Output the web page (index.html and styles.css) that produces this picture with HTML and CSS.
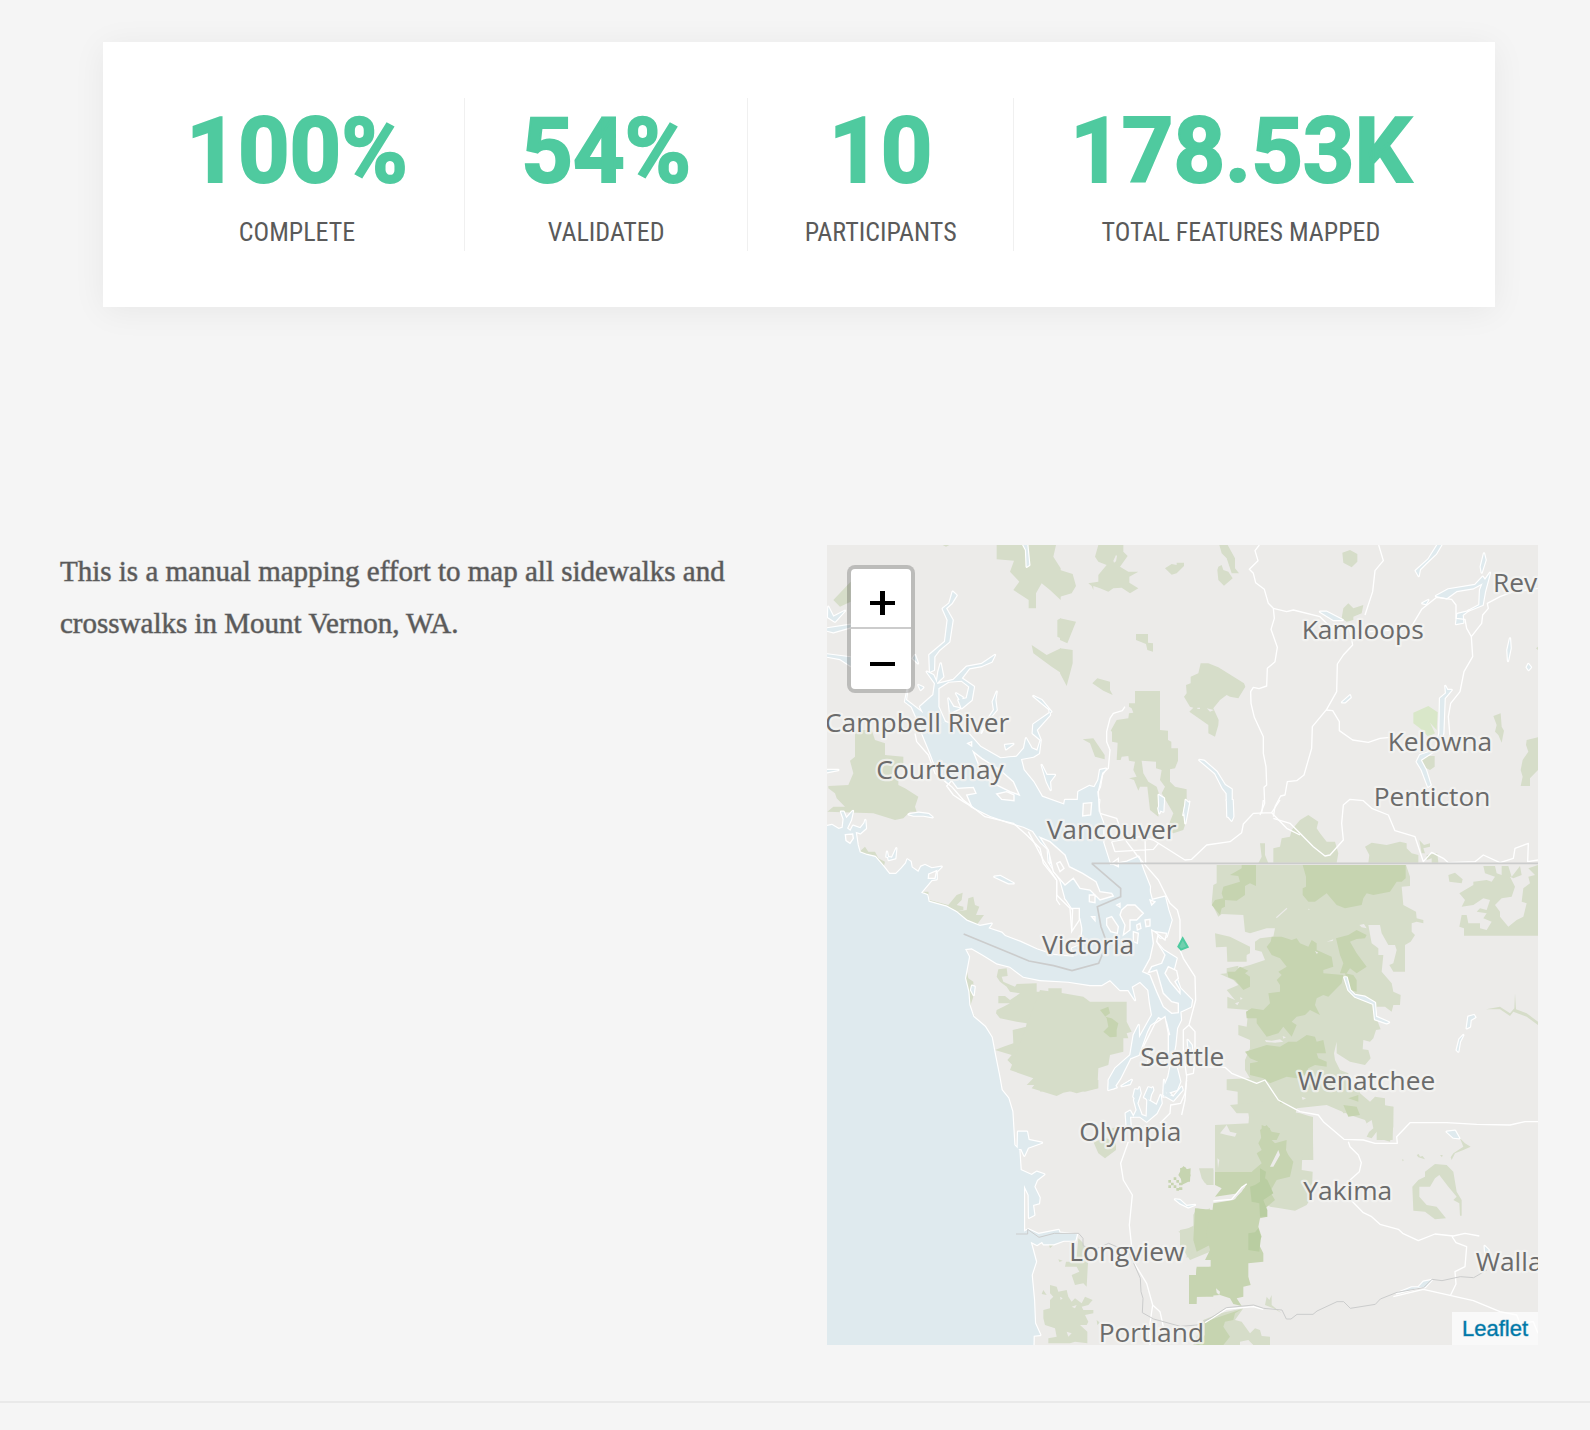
FILE: index.html
```html
<!DOCTYPE html>
<html lang="en">
<head>
<meta charset="utf-8">
<meta name="viewport" content="width=device-width, initial-scale=1">
<title>Mount Vernon sidewalks</title>
<link rel="stylesheet" href="styles.css">
</head>
<body>
<main class="page">
  <section class="stats">
    <div class="stat"><p class="stat-value">100%</p><p class="stat-label">COMPLETE</p></div>
    <div class="stat"><p class="stat-value">54%</p><p class="stat-label">VALIDATED</p></div>
    <div class="stat"><p class="stat-value">10</p><p class="stat-label">PARTICIPANTS</p></div>
    <div class="stat"><p class="stat-value">178.53K</p><p class="stat-label">TOTAL FEATURES MAPPED</p></div>
  </section>

  <section class="overview">
    <p class="description">This is a manual mapping effort to map all sidewalks and crosswalks in Mount Vernon, WA.</p>
    <div class="map">
      <svg class="map-canvas" viewBox="0 0 2133 2400" preserveAspectRatio="xMidYMid slice" role="img" aria-label="Map of the Pacific Northwest">
        <defs>
          <g id="water">
            <!-- Pacific -->
            <path d="M-20 843L0 843L15 840L35 852L47 848L50 822L42 800L50 800L58 820L75 800L78 798L72 825L60 850L70 858L78 842L100 850L112 835L115 825L117 850L100 865L86 860L92 900L98 922L120 930L145 936L170 965L187 987L207 987L224 970L237 955L241 943L251 950L254 967L274 981L282 965L294 960L314 970L344 965L329 980L329 1003L314 1005L282 1043L301 1050L305 1070L359 1085L389 1102L419 1127L459 1143L494 1136L484 1150L524 1163L534 1173L579 1190L629 1213L680 1230L740 1235L735 1210L760 1200L770 1130L755 1085L745 1135L739 1080L714 1060L739 1055L700 1000L780 1020L900 1060L960 1010L975 1065L1014 1055L1024 1095L1034 1125L1019 1175L1000 1178L984 1160L974 1175L1009 1215L1049 1240L1040 1275L1060 1330L1095 1365L1092 1385L1060 1400L1062 1425L1050 1450L1045 1500L1038 1540L1050 1570L1060 1610L1050 1635L1020 1645L1010 1635L1045 1600L1030 1560L1015 1555L1022 1480L1010 1477L1030 1470L1020 1430L994 1415L984 1430L970 1440L960 1460L935 1530L910 1540L880 1600L860 1630L845 1630L845 1605L865 1570L910 1530L920 1470L935 1440L936 1480L975 1410L969 1375L964 1335L939 1310L914 1325L924 1365L904 1335L879 1335L849 1305L824 1320L789 1320L724 1310L639 1305L589 1295L549 1265L509 1255L469 1230L434 1210L414 1212L426 1235L414 1300L424 1340L427 1380L439 1415L474 1445L494 1477L504 1530L516 1590L524 1635L544 1660L556 1700L562 1800L577 1815L581 1875L614 1890L629 1880L652 1888L630 1905L622 1925L638 1958L636 1975L618 1980L622 2010L606 2018L605 1950L591 1920L591 2060L604 2053L635 2067L695 2055L698 2063L750 2068L745 2087L710 2087L680 2098L650 2098L645 2090L630 2100L611 2090L627 2150L614 2190L621 2265L624 2335L640 2370L620 2372L619 2420L-20 2420Z"/>
            <!-- Willapa and Grays Harbor -->
            <path d="M573 1760L600 1760L605 1785L645 1793L603 1808L592 1832L583 1812L572 1812Z"/>
            <!-- Strait of Georgia -->
            <path d="M284 562L354 530L415 555L460 605L520 640L580 635L590 675L620 712L645 755L715 780L740 805L750 780L790 765L800 790L812 820L815 850L850 960L900 950L935 935L949 975L969 1025L960 1120L980 1190L780 1215L760 1120L735 1090L715 1060L700 1005L665 950L662 912L640 890L618 858L590 845L545 832L490 813L434 785L400 750L375 725L335 690L311 628Z"/>
            <g transform="translate(-21 -15)">
              <path d="M398 155L410 166L395 190L378 205L398 240L388 305L358 330L343 350L342 390L330 395L328 345L375 305L383 240L368 206L388 190Z"/>
              <path d="M320 395L340 405L352 432L400 420L440 380L485 372L525 345L515 365L485 378L448 385L425 415L462 440L455 480L425 505L415 480L440 475L448 440L425 422L385 425L355 445L355 500L375 545L310 580L275 500L255 485L262 450L258 480L310 520L300 500L340 465L345 430Z"/>
              <path d="M362 370L370 410L350 430L355 395ZM385 475L400 500L420 505L390 520ZM408 460L428 472L425 490ZM295 435L310 442L302 450ZM278 355L285 345L294 370Z"/>
              <path d="M640 468L665 480L694 515L640 553L638 580L662 600L652 632L635 625L618 595L612 625L590 650L550 655L560 665L640 650L657 640L662 600L650 570L690 525L688 508Z"/>
              <path d="M530 455L526 480L530 510L500 545L484 578L498 545L522 510L518 485ZM665 675L680 705L705 705L690 725L692 750L680 725ZM555 615L580 612L558 628Z"/>
              <path d="M610 15L622 15L628 75L620 80L618 30ZM21 265L92 254L92 262L40 277L21 272ZM21 343L92 352L92 378L60 357L21 350ZM25 200L40 230L75 212L45 245L24 232ZM20 690L55 690L20 697Z"/>
            </g>
            <g transform="translate(699 -15)">
              <path d="M120 690L138 686L126 705L120 740L112 755L118 815L90 815L85 790L60 785L68 815L52 800L55 755L88 738L103 742L115 720Z"/>
              <path d="M418 660L432 662L470 695L495 735L515 748L515 830L502 830L500 760L488 745L465 700ZM296 765L312 775L310 815L298 810ZM388 785L375 800L370 825L380 808Z"/>
            </g>
            <g transform="translate(1419 -15)">
              <path d="M412 15L424 15L408 42L378 70L360 88L356 108L347 92L385 58ZM552 40L557 60L545 98L542 80ZM570 98L555 155L548 195L505 212L488 225L490 248L468 252L472 222L500 215L538 195L540 150L548 130L520 145L470 153L440 175L408 168L445 148L525 135L548 110L555 120ZM367 190L385 180L378 192ZM60 215L80 215L128 240L100 240ZM630 295L632 325L624 363L622 330ZM685 372L693 382L686 390L680 382ZM126 487L150 466L152 472L135 487Z"/>
              <path d="M436 438L442 450L455 450L434 475L430 580L418 620L400 635L362 660L378 690L392 735L384 740L365 690L350 665L360 645L405 630L418 580L420 475L438 460Z"/>
            </g>
            <g transform="translate(639 765)">
              <path d="M560 0L578 0L580 50L575 62L565 50L570 30ZM437 0L447 10L436 70L433 40ZM365 0L372 5L358 40L355 25ZM75 0L178 0L175 30L190 70L190 125L60 80Z"/>
              <path d="M390 870L415 850L410 820L395 780L385 830L372 860L395 885L370 890ZM285 868L300 870L290 900L280 890ZM325 862L335 865L330 900L312 892ZM245 858L275 840L265 852ZM443 720L455 735L458 760L445 745ZM352 730L358 730L358 745Z"/>
            </g>
            <path d="M245 808L275 803L305 807L317 817L290 812L260 812ZM502 995L520 993L560 1015L545 1015ZM180 920L178 935L195 938L208 910L205 940L185 945ZM435 1322L443 1325L440 1350L432 1335Z"/>
            <g transform="translate(399 1605)">
              <path d="M497 100L510 92L520 110L530 90L522 60L538 22L542 40L532 70L545 105L560 110L562 60L555 50L578 22L580 30L565 60L590 75L602 45L605 70L590 100L560 125L540 110L510 110L512 140L500 140ZM612 0L618 40L640 50L665 20L668 30L640 62L610 45ZM448 0L470 22L445 30ZM485 18L515 0L510 12ZM645 358L660 360L680 378L705 375L685 382L660 370Z"/>
            </g>
            <g transform="translate(1119 885)">
              <path d="M433 412L440 412L450 450L465 465L495 470L525 488L528 530L567 547L560 550L525 538L520 492L465 470L445 450ZM805 530L822 525L826 532L812 540L810 560L800 565ZM790 585L780 605L775 635L770 630L778 598ZM740 875L765 872L778 895L760 893Z"/>
            </g>
            <g transform="translate(1059 1665)">
              <path d="M730 545L755 540L735 562L715 562ZM695 562L720 562L650 580ZM914 438L926 450L922 465L915 455Z"/>
            </g>
          </g>
        </defs>

        <g class="park">
          <g transform="translate(-21 -15)">
            <path d="M530 15L708 15L700 50L722 85L722 180L690 150L665 130L648 160L648 205L626 205L626 180L580 150L598 125L570 95L582 62L530 58ZM712 240L722 235L722 295L712 290ZM635 315L680 345L722 325L722 398L695 380L640 340ZM40 180L92 125L92 185L60 200ZM368 15L388 15L378 20Z"/>
            <path d="M105 570L155 570L165 600L195 610L195 645L250 650L250 680L215 700L235 715L235 735L255 745L295 770L285 800L290 815L270 815L250 835L225 840L160 820L22 815L40 800L75 800L50 775L45 760L25 745L25 738L85 735L100 700L90 662L105 650Z"/>
          </g>
          <g transform="translate(699 -15)">
            <path d="M115 15L190 15L190 35L203 48L180 80L205 95L235 95L208 110L208 128L235 145L210 160L185 143L160 145L145 155L120 145L100 138L100 150L95 138L85 130L115 125L115 105L140 75L115 65L105 50ZM0 90L38 102L48 138L35 160L0 170ZM0 235L48 245L38 270L22 310L0 300ZM0 325L38 330L38 370L20 438L0 400ZM315 85L335 72L350 75L350 68L372 68L372 78L350 100L335 104ZM478 15L503 15L525 55L525 85L537 100L515 100L500 55L485 40ZM475 80L485 75L490 90L505 95L518 115L492 137L475 120L472 90ZM228 282L264 282L264 308L279 310L279 335L262 330L258 312L228 300ZM97 430L112 415L150 425L150 450L158 465L130 452ZM68 598L100 595L134 645L134 658L105 650L90 610Z"/>
            <path d="M422 370L445 370L475 382L552 430L556 440L535 475L510 470L500 465L480 480L460 505L476 540L475 555L465 590L445 580L445 555L388 515L400 503L390 500L372 470L380 460L378 435L392 430L392 410L415 400Z"/>
            <path d="M225 453L300 453L300 570L324 572L324 600L334 605L334 625L354 625L354 662L345 685L330 688L330 725L345 740L380 748L380 840L370 870L340 880L320 870L340 820L305 760L315 740L300 720L305 690L288 685L288 665L245 662L250 700L265 725L290 740L300 770L295 830L270 810L262 740L240 740L235 752L222 720L207 715L230 710L220 690L225 665L207 662L205 648L185 650L182 660L170 660L173 608L156 605L156 575L152 572L170 540L205 535L207 520L220 518L215 505L207 500L207 490L225 490Z"/>
          </g>
          <g transform="translate(1419 -15)">
            <path d="M127 38L150 30L172 42L172 65L155 82L130 68ZM125 235L130 205L145 190L160 205L190 195L185 220L160 230L160 240L140 245ZM580 528L602 520L605 560L612 572L605 608L595 585L585 575L590 555ZM714 592L680 600L678 615L685 635L668 660L662 690L668 710L662 738L690 738L690 715L714 690ZM362 665L370 648L404 648L404 680L390 690L370 680ZM0 840L25 825L55 845L50 865L60 880L80 905L105 905L115 940L110 968L-80 968L-80 925L-60 920L-55 895L-30 890L-25 870ZM195 920L215 908L260 915L300 905L320 910L320 925L335 940L355 945L355 968L205 968L208 945ZM358 900L372 915L390 910L390 920L370 925L375 940L365 940ZM380 945L412 940L415 968L395 968L395 955L380 960ZM708 325L714 320L714 330Z"/>
          </g>
          <g transform="translate(-21 765)">
            <path d="M118 155L135 140L145 155L165 155L175 175L195 185L190 205L165 168L120 160ZM305 275L325 275L328 300L385 315L410 285L428 278L425 300L410 315L430 320L430 330L405 335L440 330L445 295L460 290L465 315L478 320L468 345L492 345L470 375L430 355L405 330L325 305ZM438 500L445 535L460 545L460 590L450 620L465 650L515 710L530 810L520 740L495 690L455 640L438 560ZM535 508L560 505L563 528L545 530L550 545L560 550L585 560L590 552L650 550L650 575L685 575L685 565L725 565L725 810L620 810L580 798L562 780L575 765L525 750L550 740L580 730L578 690L618 680L620 670L590 665L540 655L528 640L530 630L550 620L570 610L535 610L535 588L555 588L570 600L600 580L570 575L560 560L540 545L530 530Z"/>
          </g>
          <g transform="translate(639 765)">
            <path d="M0 570L70 580L130 590L150 605L260 605L260 665L275 695L260 700L265 715L250 715L250 755L210 765L205 795L175 805L172 865L145 870L110 880L85 872L50 875L40 885L30 870L0 875L10 855L-40 855L-20 835L-90 810ZM660 130L675 130L675 165L685 190L655 190L665 170Z"/>
          </g>
          <g transform="translate(1119 885)">
            <path d="M50 75L618 75L630 110L630 138L605 140L610 195L648 215L650 235L670 240L670 250L650 245L635 250L635 275L645 285L632 305L615 315L615 395L580 395L568 375L580 370L590 330L585 315L565 315L545 280L540 255L505 255L515 310L535 325L535 345L550 345L545 395L575 430L580 455L602 465L600 495L580 495L575 515L555 500L530 500L528 520L535 550L542 568L528 570L520 595L510 605L490 600L488 628L505 630L512 655L495 675L450 665L410 640L410 605L402 640L405 660L420 690L445 700L450 735L480 750L480 760L510 785L525 770L555 775L555 800L580 800L578 900L530 900L530 870L500 840L500 820L470 815L430 820L420 800L370 790L300 795L240 790L235 810L300 820L339 832L339 960L45 960L45 855L75 860L85 875L105 880L90 855L145 855L148 820L185 805L165 795L130 810L95 795L113 795L113 755L80 750L80 718L150 715L135 690L135 660L150 625L150 600L115 585L115 555L140 560L145 510L82 505L82 470L105 480L80 450L115 435L100 420L60 402L80 400L80 385L115 377L115 385L150 375L195 360L185 335L165 330L165 305L180 295L220 290L225 265L200 265L150 280L135 275L130 225L65 222L55 230L35 190L40 135L50 130ZM45 280L90 290L150 320L150 340L140 345L140 365L82 365L80 320L48 322Z"/>
            <path d="M745 105L765 98L788 118L785 130L748 125ZM850 78L885 78L890 100L905 105L905 78L925 78L935 110L960 78L965 105L940 115L930 110L945 140L935 170L905 175L885 195L900 215L900 230L925 260L950 240L970 230L980 190L965 185L970 145L990 130L985 110L1005 105L985 85L1014 75L1014 287L792 287L792 265L778 260L785 225L800 225L805 250L840 250L840 265L860 270L875 245L850 235L860 220L830 215L840 205L860 210L870 180L850 175L820 195L785 200L795 180L778 160L820 135L820 125L860 120L875 125L885 110L855 100ZM858 508L900 500L930 520L943 505L945 460L948 508L980 520L1014 545L1014 555L980 530L940 515L930 528L900 508Z"/>
          </g>
          <g transform="translate(399 1605)">
            <path d="M215 25L235 0L415 0L415 25L375 35L350 30L310 38L290 48ZM400 185L440 175L468 190L468 210L435 235L415 220ZM435 150L475 140L470 180ZM355 475L370 490L385 530L380 620L370 610L345 615L335 585L358 575L350 560L315 560L318 545L340 545L350 530ZM250 690L270 685L270 660L280 650L270 640L270 615L290 620L295 635L320 630L325 650L335 665L345 655L365 670L375 650L398 660L385 675L365 680L370 690L400 690L400 700L375 705L385 725L380 735L360 735L382 755L382 790L345 785L330 790L265 790L265 775L290 770L285 745L255 735L250 715ZM717 265L760 265L760 315L740 315ZM265 490L280 495L270 505ZM250 630L260 645L245 642ZM410 720L420 728L412 735ZM295 538L308 542L298 546ZM655 455L700 440L700 405L750 385L750 515L690 540L670 510L690 475Z"/>
          </g>
          <g transform="translate(1059 1665)">
            <path d="M150 15L300 0L530 0L640 20L640 80L630 125L595 115L590 95L575 115L560 110L570 90L555 60L510 45L440 15L350 25L345 50L398 50L400 180L385 175L385 150L368 145L365 210L398 215L395 290L380 315L345 332L300 325L270 320L245 300L240 215L105 215L105 75L210 70L205 40L170 40ZM58 208L100 210L100 255L75 250L65 235ZM765 192L800 195L820 215L830 275L845 300L845 347L840 347L838 310L820 300L830 290L805 260L778 225L765 235L750 260L718 260L718 290L740 315L770 320L798 355L765 358L735 335L700 332L697 260L715 240L735 230L735 215ZM840 115L855 130L872 140L850 150L825 160L815 180L812 172L820 160L850 140ZM710 165L716 162L720 170L728 168L735 178L715 172ZM666 178L672 180L668 184ZM780 165L788 165L786 172ZM185 665L210 700L225 685L240 690L245 708L270 710L270 735L220 735L205 720L180 725L180 735L40 735L70 660L120 640L190 625L165 660ZM260 590L268 600L275 585L275 615L305 640L280 625L255 615ZM0 390L25 385L45 375L60 350L40 345L50 325L75 330L95 340L95 450L65 455L40 450L20 475L20 455L0 450Z"/>
          </g>
        </g>

        <path class="park-light" transform="translate(1419 -15)" d="M340 518L385 498L413 517L410 570L390 548L405 580L385 590L360 565L340 550Z"/>

        <g class="forest">
          <g transform="translate(1119 885)">
            <path d="M308 75L617 75L617 115L605 125L590 125L580 140L570 155L520 165L500 160L490 175L485 195L435 205L410 195L380 160L345 185L325 185L308 165L308 145L318 140L318 110ZM90 105L125 85L125 75L168 75L168 138L150 130L135 138L135 165L110 182L75 180L75 200L65 205L60 225L35 195L45 180L70 175L65 160L70 140L120 125L115 108ZM215 290L245 290L275 300L290 295L300 310L325 320L335 300L350 310L350 330L395 350L400 380L370 390L370 400L430 405L425 430L405 450L385 470L370 465L350 475L345 495L360 525L330 510L315 525L290 530L275 545L290 555L275 590L250 560L235 580L200 590L170 550L170 535L140 535L138 515L155 505L190 510L210 490L205 460L240 455L240 435L230 420L245 405L235 395L260 380L240 355L215 345L200 320L212 305ZM408 295L445 285L470 270L500 285L495 295L470 297L450 305L470 340L500 380L470 400L450 385L440 400L420 400L430 370L420 345ZM82 395L105 395L120 380L145 392L135 400L150 410L150 440L130 450L105 420L85 412ZM135 635L200 615L240 620L265 605L290 605L320 585L345 590L350 605L370 600L378 640L350 640L355 655L380 665L380 680L345 675L325 685L315 705L290 715L260 710L210 730L190 715L150 705L150 670L175 665L150 655ZM435 400L460 405L470 420L470 455L450 450ZM180 870L200 855L215 875L240 880L230 900L185 900Z"/>
            <path d="M240 790L243 780L250 790ZM445 775L475 765L475 785Z"/>
          </g>
          <path transform="translate(639 765)" d="M180 630L205 620L210 640L195 650L215 655L235 670L230 690L230 710L210 712L190 695L205 680L200 655Z"/>
          <path transform="translate(399 1605)" d="M655 285L660 275L670 258L680 268L692 265L690 305L672 305L665 300ZM625 300h8v8h-8ZM641 292h8v8h-8ZM633 308h8v8h-8ZM649 300h8v8h-8ZM657 308h10v8h-10ZM641 316h8v8h-8ZM625 316h8v8h-8ZM657 322h10v8h-10ZM649 324h8v8h-8ZM687 585L708 585L710 560L760 560L760 650L710 650L710 672L687 672ZM705 385L760 390L760 490L710 515L700 480Z"/>
          <path transform="translate(1059 1665)" d="M245 75L270 85L275 120L285 130L320 120L318 150L325 165L340 185L330 230L290 240L270 275L285 300L250 330L262 350L240 355L235 380L245 410L235 430L250 460L250 485L205 490L205 530L212 555L190 560L190 590L170 595L185 618L160 612L150 595L120 585L50 590L48 612L28 612L30 530L48 525L50 505L92 500L92 480L75 480L90 450L78 400L85 370L95 350L100 310L160 300L185 275L200 250L175 280L105 290L125 265L105 255L105 215L215 215L245 190L230 160L245 150L235 130L245 110ZM75 665L185 628L165 640L160 660L135 665L130 680L150 710L130 735L45 735L75 705ZM0 205L15 200L32 225L25 245L5 255ZM490 15L530 20L540 45L505 50Z"/>
        </g>
        <path class="woods" transform="translate(1059 1665)" d="M240 205L258 215L255 235L262 240L280 280L250 300L262 330L262 350L240 350L238 310L215 305L210 260L225 255L240 245ZM205 400L225 397L235 385L243 410L238 455L205 450Z"/>

        <!-- Clearings inside the parks -->
        <g class="clearing">
          <path transform="translate(1119 885)" d="M228 232L260 203L262 206L230 235ZM478 255L492 252L500 265L485 262ZM195 600L215 602L240 598L250 605L225 608L198 606ZM248 588L258 592L250 596ZM325 206L330 208L325 210ZM140 350L148 345L150 368L142 366ZM380 305L400 298L398 303ZM105 490L118 485L112 496ZM120 472L128 475L122 480ZM345 333L355 338L350 341ZM305 770L318 775L308 780ZM500 850L515 840L520 865L508 875Z"/>
          <path transform="translate(1059 1665)" d="M120 100L140 75L150 95L170 100L165 110L140 105ZM112 175L118 180L114 205ZM270 200L295 150L300 165L280 200ZM150 300L200 248L195 262L178 280L165 298ZM108 565L120 575L118 585L110 578ZM85 640L100 625L110 630L98 642Z"/>
          <path transform="translate(399 1605)" d="M335 680L350 675L345 685ZM320 755L335 760L325 770ZM300 650L308 655L302 660Z"/>
          <path transform="translate(699 -15)" d="M160 62L168 45L171 48L168 64L162 68ZM412 503L420 503L420 507L412 507ZM440 505L462 510L450 515Z"/>
        </g>

        <use href="#water" class="shore"/>
        <use href="#water" class="sea"/>

        <g class="island">
          <g transform="translate(-21 -15)">
            <path d="M380 738L395 722L412 745L460 742L468 760L440 765L455 800L430 785L400 765ZM460 635L485 655L540 690L580 725L598 765L570 755L520 730L490 710L478 680ZM530 762L560 755L582 765L582 782L545 778ZM443 610L455 605L455 618Z"/>
          </g>
          <g transform="translate(-21 765)"><path d="M76 104L98 102L100 115L90 130L78 122ZM326 222L350 212L345 235L325 235ZM688 142L720 160L700 180L690 190Z"/></g>
          <g transform="translate(639 765)">
            <path d="M0 112L30 125L75 165L88 200L128 220L168 245L180 275L215 280L220 288L180 300L150 270L120 265L100 235L75 255L40 215L25 150ZM50 190L60 185L72 205L60 215ZM148 285L165 285L165 308L148 305ZM230 315L240 310L240 322ZM245 330L262 315L285 315L310 340L290 360L270 360L270 390L250 405L255 375L240 345ZM290 375L300 370L303 385L292 390ZM315 360L330 358L330 378L318 380ZM200 355L215 350L235 380L232 400L212 395L200 375ZM155 350L165 350L165 362ZM330 300L345 305L335 315ZM335 390L355 400L350 425L375 465L365 490L335 500L325 518L350 510L370 580L395 605L415 610L415 638L395 640L370 620L350 575L330 525L308 515L330 475L340 430ZM385 500L375 520L390 545L420 580L420 570L405 545L415 535L410 512ZM345 670L375 650L385 700L385 760L350 790L320 800L330 750L310 740Z"/>
            <path d="M345 395L380 400L375 420ZM280 395L295 400L292 430L280 425ZM130 10L155 8L152 45L128 48ZM98 325L118 325L118 360L95 395ZM215 190L235 175L235 200Z"/>
          </g>
        </g>

        <g class="road">
          <g transform="translate(-21 -15)"><path d="M285 580L290 605L325 645L345 700L395 740L430 780L495 830L580 850L620 885L660 925L670 970L710 1020L710 1080L720 1095"/></g>
          <g transform="translate(699 -15)">
            <path d="M195 500L187 512L160 520L150 535L140 575L140 605L150 630L145 685L128 700L115 755L118 815"/>
            <path d="M598 15L585 32L594 62L568 88L580 100L587 128L613 148L625 190L640 205L680 215L700 210L780 230L810 260L930 275L1030 268M640 205L643 235L633 268L652 322L645 365L622 385L620 438L597 446L580 442L572 455L573 490L583 532L610 590L610 640L618 680L620 735L612 742L614 790L600 825M645 800L662 768L675 765L682 725L710 722L732 705L755 625L757 560L800 508L830 455L832 372L850 345L878 315L870 270M645 800L640 830"/>
          </g>
          <g transform="translate(1419 -15)">
            <path d="M236 15L250 62L225 92L218 155L195 225M320 275L340 250L365 208L410 172L455 178L468 195L468 235L495 238L500 265L514 290L518 350L492 395L480 455L452 490L445 530L450 590M514 290L545 250L548 225L565 205L562 190L600 170L640 155L714 145M78 510L98 512L118 545L118 572L158 600L205 607L240 595L270 592"/>
            <path d="M-80 835L-30 850L0 880L40 920L75 948L90 945L130 900L125 850L130 795L150 778L190 782L215 805L265 825L285 872L345 890L370 965L395 937L430 955L445 968L525 965L550 945L600 968L640 955L645 925L685 910L683 965L714 960"/>
          </g>
          <g transform="translate(639 765)">
            <path d="M-35 95L10 180L50 240L50 285L90 325L95 390M180 40L230 55L240 85L260 125L290 165L320 200L355 240L390 310L412 330L420 360L420 450L430 475L465 530L467 600L447 675L430 690L430 760L440 830L435 900L425 945M447 675L465 695L465 780L460 820L440 825M215 125L300 110L340 120L435 180L455 178L500 135L570 125L605 98L610 72L640 40L695 38L740 85L780 105M665 38L670 0M695 38L720 0M225 155L340 148L355 130M315 110L317 190M215 125L225 155"/>
            <path d="M470 800L555 802L575 820L650 850L675 840L715 900L780 935L835 945L850 965L912 1018L970 1020L1005 1030L1072 1030L1070 1010L1110 968L1220 968L1310 973L1410 975L1455 965L1494 965"/>
          </g>
          <g transform="translate(399 1605)"><path d="M680 0L675 40L662 70L632 75L630 100L600 130M505 185L482 250L490 300L517 345L508 435L515 500L520 545L560 610L578 675L600 695L610 740M578 675L570 730L570 795"/></g>
          <g transform="translate(1059 1665)"><path d="M505 125L510 140L535 165L544 188L538 215L510 240M515 302L550 338L575 350L600 373L655 388L668 400L715 422L765 402L820 408L855 400L898 408M815 408L828 428L860 440L855 500L825 515L828 552L812 585M100 303L155 298L185 262L200 252M75 668L140 627L220 620L250 628M640 590L730 568L880 602L960 635L1010 645L1020 670L1060 665L1074 700"/></g>
        </g>

        <g class="border">
          <path d="M794 955L2133 955M794 955L881 1030L881 1055L811 1085L822 1145L840 1195L815 1255L735 1277L680 1262L606 1248L410 1167"/>
          <path class="thin" d="M567 2067L602 2067L602 2053L636 2077L682 2065L755 2065L768 2080L768 2102L800 2115L845 2095L905 2120L940 2200L942 2240L948 2260L946 2303L980 2322L1060 2344L1110 2340L1150 2320L1198 2288L1280 2280L1310 2290L1365 2295L1378 2322L1392 2322L1410 2308L1458 2308L1470 2298L1530 2270L1550 2270L1570 2290L1645 2278L1660 2262L1710 2242L1790 2228L1815 2203L1845 2207L1900 2195L1940 2198L1980 2175"/>
        </g>
        <path class="aoi" d="M1067 1180L1082 1206L1062 1214L1054 1205Z"/>

        <g class="place">
          <text x="-6" y="560">Campbell River</text>
          <text x="148" y="702">Courtenay</text>
          <text x="659" y="882">Vancouver</text>
          <text x="645" y="1228">Victoria</text>
          <text x="940" y="1564">Seattle</text>
          <text x="1424" y="281">Kamloops</text>
          <text x="1998" y="140">Rev</text>
          <text x="1682" y="618">Kelowna</text>
          <text x="1640" y="784">Penticton</text>
          <text x="1412" y="1636">Wenatchee</text>
          <text x="757" y="1789">Olympia</text>
          <text x="727" y="2149">Longview</text>
          <text x="815" y="2391">Portland</text>
          <text x="1429" y="1966">Yakima</text>
          <text x="1946" y="2178">Walla</text>
        </g>
      </svg>
      <div class="zoom">
        <button class="zoom-button" type="button" aria-label="Zoom in"><svg class="zoom-icon" viewBox="0 0 25 25"><path d="M0 10h10V0h5v10h10v4H15v10h-5V14H0z"/></svg></button>
        <button class="zoom-button" type="button" aria-label="Zoom out"><svg class="zoom-icon" viewBox="0 0 25 25"><path d="M0 10h25v4H0z"/></svg></button>
      </div>
      <div class="attribution"><a href="#">Leaflet</a></div>
    </div>
  </section>
</main>
</body>
</html>
```
FILE: styles.css
```css
* { box-sizing: border-box; }

body {
  margin: 0;
  background: #f5f5f5;
  color: #5a5a5a;
}

p { margin: 0; }

.page {
  padding: 42px 0 56px;
  border-bottom: 2px solid #e9e9e9;
}

.stats {
  display: flex;
  margin: 0 95px 0 103px;
  padding: 56px 27px;
  background: #fff;
  box-shadow: 0 4px 32px rgba(0, 0, 0, 0.06);
}

.stat {
  flex: 1 1 auto;
  padding: 0 56px;
  text-align: center;
}

.stat + .stat { border-left: 1px solid #f0f0f0; }

.stat-value {
  color: #4fca9f;
  font: 700 90px/108px Roboto, sans-serif;
  -webkit-text-stroke: 2px #4fca9f;
}

.stat-label {
  margin-top: 8px;
  font: 26px/37px "Liberation Sans Narrow", "Roboto Condensed", "Liberation Sans", sans-serif;
  white-space: nowrap;
}

.overview {
  display: grid;
  grid-template-columns: 1fr 1fr;
  gap: 56px;
  margin-top: 238px;
  padding: 0 52px 0 60px;
}

.description {
  font: 29px/52px "Liberation Serif", serif;
  -webkit-text-stroke: 1px rgba(90, 90, 90, 0.5);
}

.map {
  position: relative;
  height: 800px;
  overflow: hidden;
  background: #ecebe9;
}

.map-canvas {
  display: block;
  width: 100%;
  height: 100%;
}

.park { fill: #d6ddc9; }
.park-light { fill: #d9e7c9; }
.forest { fill: #c6d4b0; }
.woods { fill: #b9cda1; }
.clearing { fill: #ecebe9; }
.shore { fill: #fff; stroke: #fff; stroke-width: 7; stroke-linejoin: round; }
.sea { fill: #dfeaee; }
.island { fill: #ecebe9; stroke: #fff; stroke-width: 4; }
.road { fill: none; stroke: #fff; stroke-width: 4; stroke-linejoin: round; }
.border { fill: none; stroke: #cbcccc; stroke-width: 5; }
.border .thin { stroke-width: 3; }
.aoi { fill: #72cfae; stroke: #4fca9f; stroke-width: 6; }

.place {
  fill: #6b6b6b;
  stroke: rgba(244, 244, 242, 0.8);
  stroke-width: 14;
  stroke-linejoin: round;
  paint-order: stroke;
  font: 79px "Open Sans", "Noto Sans", sans-serif;
}

.zoom {
  position: absolute;
  top: 20px;
  left: 20px;
  display: grid;
  width: 68px;
  border: 4px solid rgba(0, 0, 0, 0.2);
  border-radius: 8px;
  background: #fff;
  background-clip: padding-box;
}

.zoom-button {
  display: flex;
  align-items: center;
  justify-content: center;
  height: 60px;
  padding: 10px 0 0 3px;
  border: 0;
  background: none;
  color: #000;
}

.zoom-button:first-child { border-bottom: 2px solid #ccc; }

.zoom-icon {
  width: 25px;
  height: 25px;
  fill: currentColor;
}

.attribution {
  position: absolute;
  right: 0;
  bottom: 0;
  padding: 0 10px;
  background: rgba(255, 255, 255, 0.7);
  font: 22px/33px "Liberation Sans", sans-serif;
}

.attribution a {
  color: #0078a8;
  text-decoration: none;
  -webkit-text-stroke: 1px rgba(0, 120, 168, 0.4);
}
```
